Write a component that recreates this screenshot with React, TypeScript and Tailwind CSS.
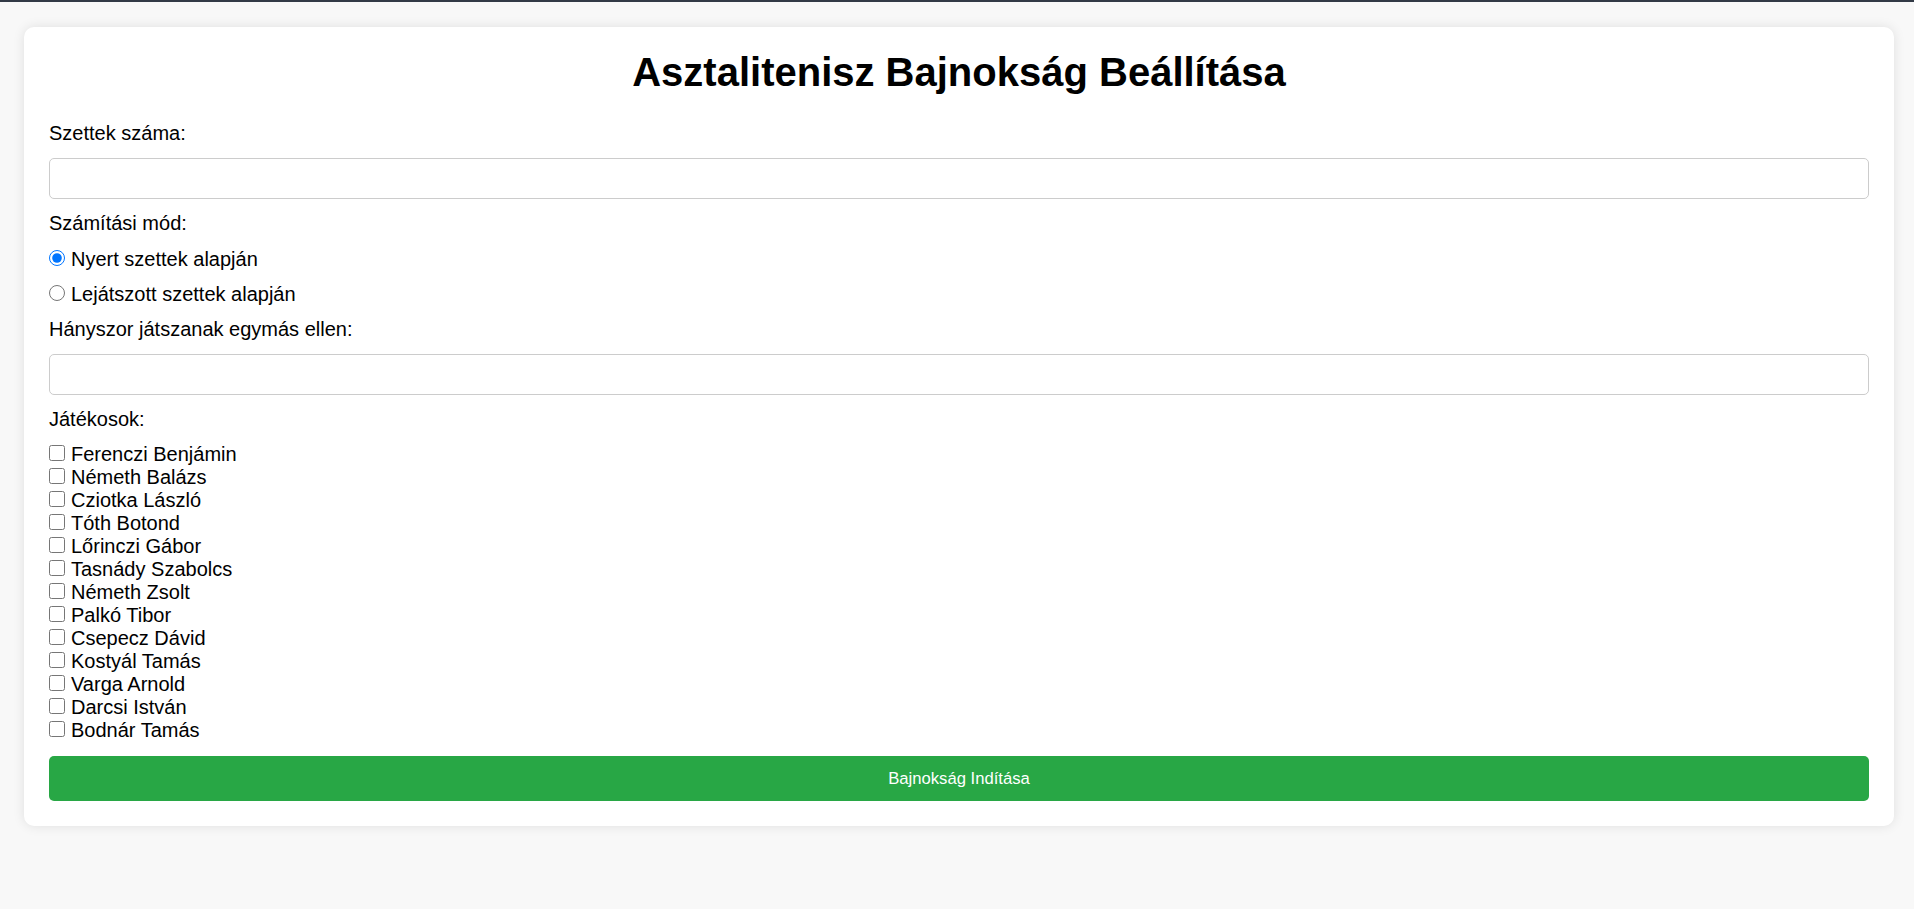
import React from "react";

const players = [
  "Ferenczi Benjámin",
  "Németh Balázs",
  "Cziotka László",
  "Tóth Botond",
  "Lőrinczi Gábor",
  "Tasnády Szabolcs",
  "Németh Zsolt",
  "Palkó Tibor",
  "Csepecz Dávid",
  "Kostyál Tamás",
  "Varga Arnold",
  "Darcsi István",
  "Bodnár Tamás",
];

export default function App() {
  return (
    <div
      className="min-h-screen bg-[#f8f8f8] border-t-2 border-[#323a46] pt-[25px] pl-[24px] pr-[20px] text-black"
      style={{ fontFamily: '"Liberation Sans", Arial, sans-serif' }}
    >
      <div className="bg-white rounded-[10px] shadow-[0_0_12px_rgba(0,0,0,0.1)] px-[25px] pt-[22px] pb-[25px]">
        <h1 className="text-[40px] font-bold leading-[46px] text-center mb-[27px]">
          Asztalitenisz Bajnokság Beállítása
        </h1>

        <label className="block text-[20px] leading-[23px]">Szettek száma:</label>
        <input
          type="number"
          className="block w-full h-[41px] mt-[13px] border border-[#ccc] rounded-[5px] px-[10px] text-[20px] bg-white"
        />

        <label className="block text-[20px] leading-[23px] mt-[13px]">Számítási mód:</label>
        <label className="flex items-start text-[20px] leading-[23px] mt-[13px] h-[23px]">
          <input type="radio" name="mode" defaultChecked className="w-[16px] h-[16px] m-0 mt-[2px] mr-[6px] accent-[#0075ff]" />
          Nyert szettek alapján
        </label>
        <label className="flex items-start text-[20px] leading-[23px] mt-[12px] h-[23px]">
          <input type="radio" name="mode" className="w-[16px] h-[16px] m-0 mt-[2px] mr-[6px] accent-[#0075ff]" />
          Lejátszott szettek alapján
        </label>

        <label className="block text-[20px] leading-[23px] mt-[12px]">Hányszor játszanak egymás ellen:</label>
        <input
          type="number"
          className="block w-full h-[41px] mt-[13px] border border-[#ccc] rounded-[5px] px-[10px] text-[20px] bg-white"
        />

        <label className="block text-[20px] leading-[23px] mt-[13px]">Játékosok:</label>
        <div className="mt-[12px] flex flex-col">
          {players.map((p) => (
            <label key={p} className="flex items-start text-[20px] leading-[23px] h-[23px]">
              <input type="checkbox" className="w-[16px] h-[16px] m-0 mt-[2px] mr-[6px]" />
              {p}
            </label>
          ))}
        </div>

        <button className="block w-full h-[45px] mt-[14px] bg-[#28a745] text-white text-[16.67px] rounded-[5px]">
          Bajnokság Indítása
        </button>
      </div>
    </div>
  );
}
